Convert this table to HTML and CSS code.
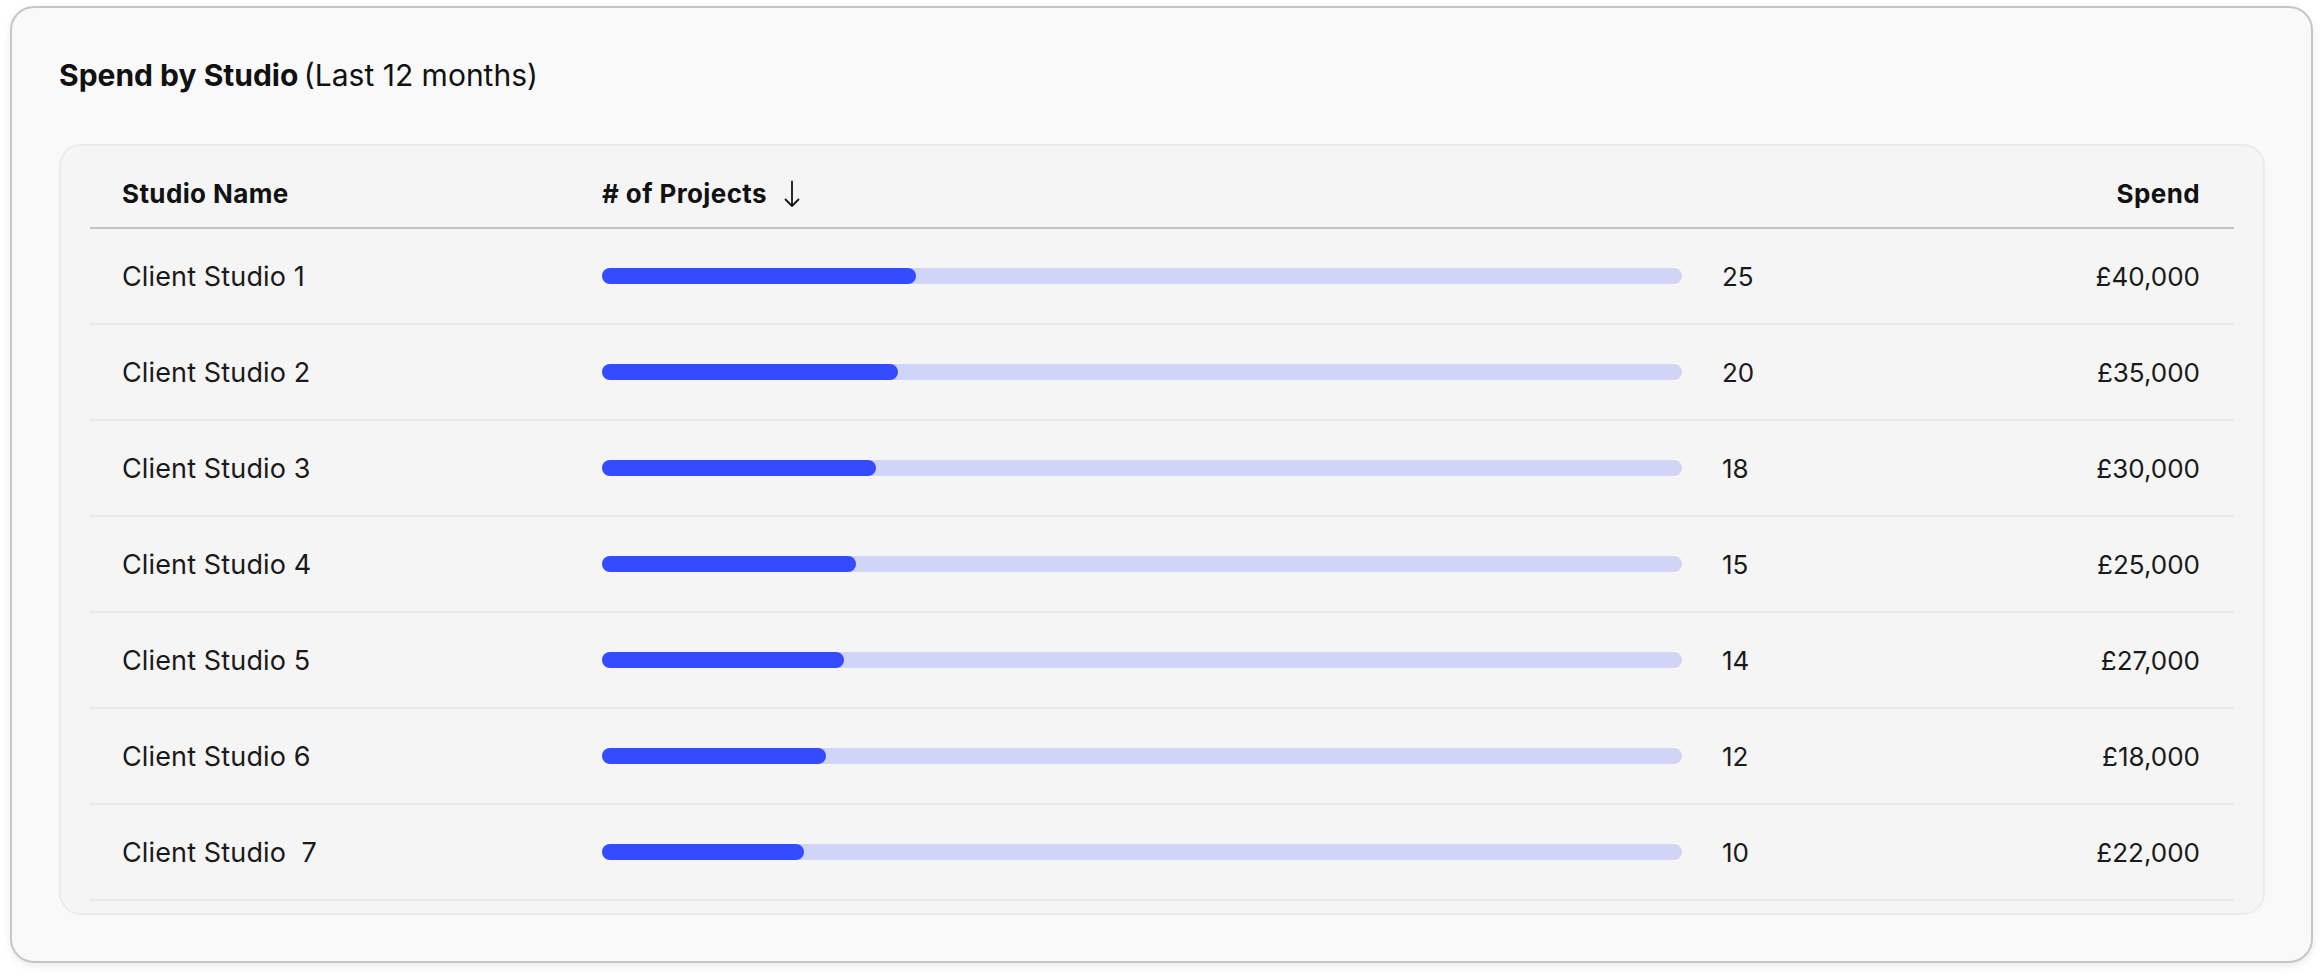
FILE: index.html
```html
<!DOCTYPE html>
<html lang="en">
<head>
<meta charset="utf-8">
<title>Spend by Studio</title>
<link rel="stylesheet" href="styles.css">
</head>
<body>
<section class="card">
  <h2 class="title"><strong>Spend by Studio</strong> <span class="sub">(Last 12 months)</span></h2>
  <div class="panel">
    <div class="row head">
      <div class="c-name">Studio Name</div>
      <div class="c-proj">
        <span># of Projects</span>
        <svg class="arrow" width="16" height="28" viewBox="0 0 16 28" aria-hidden="true">
          <path d="M8 1.5 V26 M1.5 19.5 L8 26 L14.5 19.5" fill="none" stroke="#151515" stroke-width="1.8" stroke-linecap="round" stroke-linejoin="round"/>
        </svg>
      </div>
      <div class="c-spend">Spend</div>
    </div>

    <div class="row">
      <div class="c-name">Client Studio 1</div>
      <div class="c-proj"><div class="track"><div class="fill" style="width:29.1%"></div></div><span class="num">25</span></div>
      <div class="c-spend num">£40,000</div>
    </div>
    <div class="row">
      <div class="c-name">Client Studio 2</div>
      <div class="c-proj"><div class="track"><div class="fill" style="width:27.4%"></div></div><span class="num">20</span></div>
      <div class="c-spend num">£35,000</div>
    </div>
    <div class="row">
      <div class="c-name">Client Studio 3</div>
      <div class="c-proj"><div class="track"><div class="fill" style="width:25.4%"></div></div><span class="num">18</span></div>
      <div class="c-spend num">£30,000</div>
    </div>
    <div class="row">
      <div class="c-name">Client Studio 4</div>
      <div class="c-proj"><div class="track"><div class="fill" style="width:23.5%"></div></div><span class="num">15</span></div>
      <div class="c-spend num">£25,000</div>
    </div>
    <div class="row">
      <div class="c-name">Client Studio 5</div>
      <div class="c-proj"><div class="track"><div class="fill" style="width:22.4%"></div></div><span class="num">14</span></div>
      <div class="c-spend num">£27,000</div>
    </div>
    <div class="row">
      <div class="c-name">Client Studio 6</div>
      <div class="c-proj"><div class="track"><div class="fill" style="width:20.7%"></div></div><span class="num">12</span></div>
      <div class="c-spend num">£18,000</div>
    </div>
    <div class="row">
      <div class="c-name">Client Studio&nbsp; 7</div>
      <div class="c-proj"><div class="track"><div class="fill" style="width:18.7%"></div></div><span class="num">10</span></div>
      <div class="c-spend num">£22,000</div>
    </div>
  </div>
</section>
</body>
</html>
```

FILE: styles.css
```css
* { box-sizing: border-box; }

html, body {
  margin: 0;
  background: #ffffff;
}

body {
  padding: 6px 11px 15px 10px;
  font-family: Inter, "Liberation Sans", sans-serif;
  color: #151515;
}

.card {
  background: #f9f9f9;
  border: 2px solid #c6c6c6;
  border-radius: 24px;
  box-shadow: 0 3px 8px rgba(0, 0, 0, 0.08);
  padding: 49px 46px 46px 47px;
  height: 957px;
}

.title {
  margin: 0 0 51px;
  font-size: 30px;
  line-height: 36px;
  font-weight: 400;
  letter-spacing: 0;
  word-spacing: -3px;
  color: #111;
}

.title strong {
  font-weight: 700;
  letter-spacing: 0;
  word-spacing: 0;
}

.title .sub {
  word-spacing: 0;
}

.panel {
  background: #f5f5f5;
  border: 2px solid #ebebeb;
  border-radius: 22px;
  padding: 0 29px 12px;
}

.row {
  display: flex;
  align-items: center;
  height: 96px;
  border-bottom: 2px solid #e9e9e9;
  font-size: 27px;
  letter-spacing: 0.005em;
  color: #1a1a1a;
}

.row.head {
  height: 83px;
  padding-top: 14px;
  border-bottom: 2px solid #c3c3c3;
  font-weight: 700;
  font-size: 26px;
  letter-spacing: 0.015em;
  color: #121212;
}

.c-name {
  width: 480px;
  padding-left: 32px;
  flex: none;
}

.c-proj {
  width: 1200px;
  flex: none;
  padding-left: 32px;
  display: flex;
  align-items: center;
}

.arrow {
  margin-left: 17px;
  display: block;
}

.track {
  width: 1080px;
  height: 16px;
  border-radius: 8px;
  background: #d0d4f7;
  flex: none;
}

.fill {
  height: 100%;
  border-radius: 8px;
  background: #344bff;
}

.c-proj .num {
  margin-left: 40px;
}

.num {
  font-size: 26px;
  letter-spacing: 0;
}

.c-spend {
  flex: 1;
  text-align: right;
  padding-right: 34px;
}
```
